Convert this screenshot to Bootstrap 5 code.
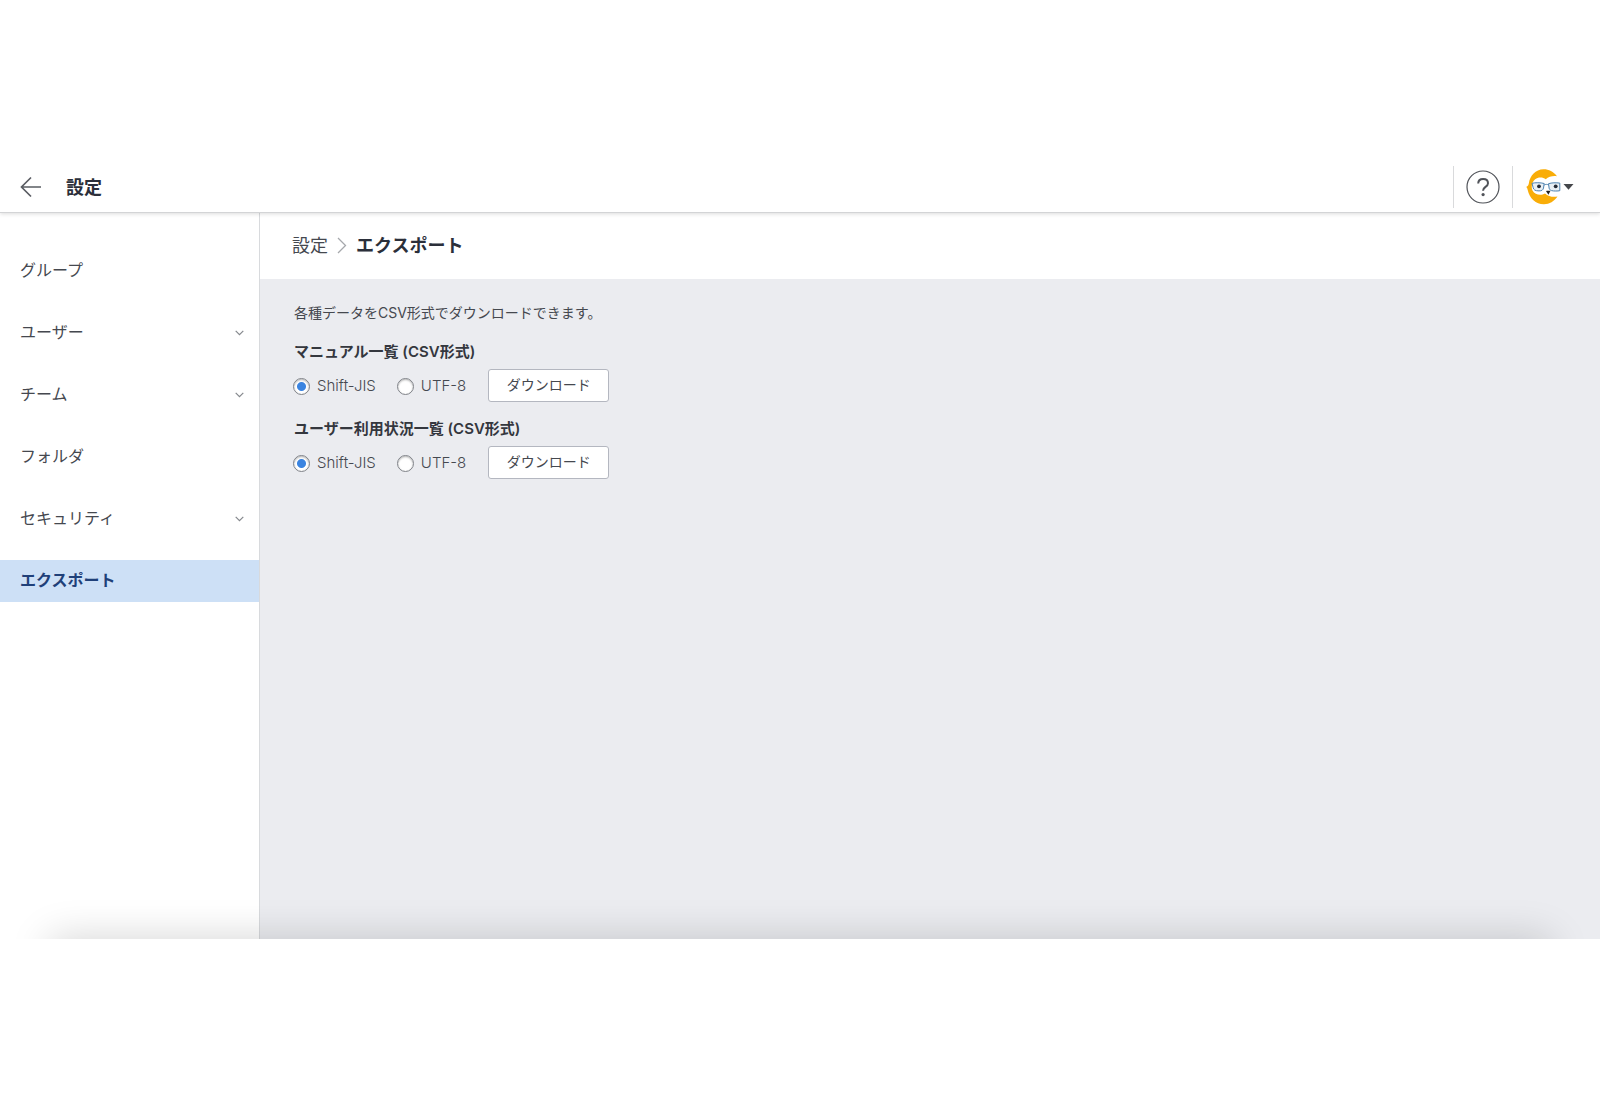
<!DOCTYPE html>
<html lang="ja">
<head>
<meta charset="utf-8">
<meta name="viewport" content="width=device-width, initial-scale=1">
<title>設定 - エクスポート</title>
<link href="https://cdn.jsdelivr.net/npm/bootstrap@5.3.0/dist/css/bootstrap.min.css" rel="stylesheet">
<style>
  body { font-family: Inter, "Noto Sans CJK JP", sans-serif; font-size: 14px; line-height: 21px; color: #45484f; background: #fff; }
  a { color: inherit; text-decoration: none; }
  .app-shell { margin-top: 160px; overflow: hidden; }
  .app-shell::after { content: ""; position: absolute; left: 50px; right: 50px; top: 100%; height: 40px; box-shadow: 0 0 40px rgba(0, 0, 0, .18); pointer-events: none; }
  .app-bar { height: 53px; padding: 2px 26px 0 20px; border-bottom: 1px solid #d3d4d6; box-shadow: 0 1px 4px rgba(0, 0, 0, .14); z-index: 1; background: #fff; }
  .app-title { font-size: 18px; line-height: 27px; font-weight: 700; color: #2b2f3a; margin-left: 24px; }
  .bar-sep { width: 1px; height: 42px; background: #d9dadc; }
  .bar-btn { background: none; border: 0; padding: 0; display: flex; align-items: center; }
  .account-btn { margin-left: 13px; }
  .app-body { min-height: 66vh; }
  .side-menu { width: 260px; padding-top: 37px; border-right: 1px solid #d8dadd; gap: 20px; }
  .side-menu a { height: 42px; padding: 0 20px 3px; font-size: 16px; line-height: 24px; }
  .side-menu svg { margin-right: -5px; margin-top: 2px; }
  .side-menu a.current { background: #cde0f6; color: #1f4079; font-weight: 700; }
  .crumbs { height: 66px; padding: 0 32px 2px; font-size: 18px; line-height: 27px; gap: 9px; }
  .crumbs strong { color: #2b2f3a; }
  .export-area { background: #ebecf0; padding: 23px 34px; }
  .export-area p { margin-bottom: 18px; }
  .export-form { margin-bottom: 16px; }
  .export-form h2 { font-size: 15px; line-height: 21px; font-weight: 600; color: #34373e; margin-bottom: 7px; }
  .choice { display: flex; align-items: center; gap: 7px; margin-right: 22px; font-size: 15px; line-height: 21px; font-weight: 300; }
  .choice input { appearance: none; width: 17px; height: 17px; margin: 2px 0 0 -1px; border: 1px solid #7f8288; border-radius: 50%; background: #fff; box-shadow: inset 0 1px 2px rgba(0, 0, 0, .3); }
  .choice input:checked { background: radial-gradient(circle, #3b84e0 4px, #fff 5px); }
  .dl-btn { width: 121px; height: 33px; padding: 0 0 2px; border: 1px solid #b4b7c0; border-radius: 3px; background: #fff; color: #45484f; font-size: 14px; line-height: 21px; }
</style>
<script src="https://cdn.jsdelivr.net/npm/bootstrap@5.3.0/dist/js/bootstrap.bundle.min.js"></script>
</head>
<body>
<div class="app-shell position-relative d-flex flex-column">
  <header class="app-bar d-flex align-items-center position-relative">
    <a href="#" aria-label="戻る" class="d-flex"><svg width="22" height="22" viewBox="0 0 22 22" fill="none" stroke="#5a5d63" stroke-width="1.7"><path d="M21 11H1.5M11 1.5 1.5 11l9.500 9.500"/></svg></a>
    <h1 class="app-title mb-0">設定</h1>
    <div class="d-flex align-items-center ms-auto">
      <span class="bar-sep"></span>
      <button type="button" class="bar-btn mx-2 px-1" aria-label="ヘルプ"><svg width="34" height="34" viewBox="0 0 34 34" fill="none" stroke="#505359"><circle cx="17" cy="17" r="16" stroke-width="1.2"/><path d="M12.200 13.500c.1-2.900 2.100-4.500 4.900-4.500 2.900 0 4.900 1.700 4.900 4.200 0 3.600-4.900 3.800-4.900 7.200v.4" stroke-width="2"/><circle cx="17.100" cy="24.600" r="1.600" fill="#505359" stroke="none"/></svg></button>
      <span class="bar-sep"></span>
      <button type="button" class="bar-btn account-btn" aria-label="アカウント"><svg width="48" height="36" viewBox="0 0 48 36">
        <path d="M31 7.200C27.500 2.500 22.500.2 17.500.3 9.500.6 4 6.500 2.800 14.500c-.2 1.500-.8 2.500-2.600 3.500.9.800 1.200 1.700 1.500 3C3.500 29.500 10 35.400 18 35.300c5.500-.2 10-2.800 13.500-7.800-4.500.8-9 .2-12.500-3-4 2.500-10 1.500-12.500-3-2.200-5 .5-12 6.500-13 2.800-.3 5 .3 6.800 1.800C22.500 7.700 26.700 6.600 31 7.200z" fill="#f9ad08"/>
        <path d="M6 14.300c3-.8 8.500-.8 12.200.2l-.7 4.500c-.4 2-1.800 2.900-4.500 2.900-3.800 0-5.500-1-5.900-3.500zM22.500 14.700c3.200-1 7.500-1.200 11.300-.6v7.600c-2 .4-6 .5-8.300-.1-1.500-.5-2.200-1.300-2.400-2.600z" fill="#e9eff4" stroke="#4d82b0" stroke-width="1"/>
        <path d="M18.200 16c1.300-.8 3.200-.8 4.500 0" fill="none" stroke="#4d82b0"/>
        <circle cx="13" cy="17.300" r="1.900" fill="#252b36"/><circle cx="29.700" cy="17.300" r="1.900" fill="#252b36"/>
        <path d="M20 22c1-.5 3.200-.5 4.400 0l-2 3.800z" fill="#222"/>
        <path d="M37.500 15h10l-5 5.800z" fill="#45474b"/>
      </svg></button>
    </div>
  </header>
  <div class="app-body d-flex">
    <nav class="side-menu d-flex flex-column flex-shrink-0" aria-label="設定">
      <a href="#" class="d-flex align-items-center">グループ</a>
      <a href="#" class="d-flex align-items-center justify-content-between">ユーザー<svg width="9" height="6" viewBox="0 0 9 6" fill="none" stroke="#85888d" stroke-width="1.200"><path d="M.7.9 4.500 4.700 8.300.9"/></svg></a>
      <a href="#" class="d-flex align-items-center justify-content-between">チーム<svg width="9" height="6" viewBox="0 0 9 6" fill="none" stroke="#85888d" stroke-width="1.200"><path d="M.7.9 4.500 4.700 8.300.9"/></svg></a>
      <a href="#" class="d-flex align-items-center">フォルダ</a>
      <a href="#" class="d-flex align-items-center justify-content-between">セキュリティ<svg width="9" height="6" viewBox="0 0 9 6" fill="none" stroke="#85888d" stroke-width="1.200"><path d="M.7.9 4.500 4.700 8.300.9"/></svg></a>
      <a href="#" class="d-flex align-items-center current" aria-current="page">エクスポート</a>
    </nav>
    <main class="d-flex flex-column flex-grow-1">
      <div class="crumbs d-flex align-items-center">
        <a href="#">設定</a>
        <svg width="10" height="17" viewBox="0 0 10 17" fill="none" stroke="#a6a8ac" stroke-width="1.300"><path d="m1 1 7.500 7.500L1 16"/></svg>
        <strong>エクスポート</strong>
      </div>
      <section class="export-area flex-grow-1">
        <p>各種データをCSV形式でダウンロードできます。</p>
        <form class="export-form">
          <h2>マニュアル一覧 (CSV形式)</h2>
          <div class="d-flex align-items-center">
            <label class="choice"><input type="radio" name="manual" checked>Shift-JIS</label>
            <label class="choice"><input type="radio" name="manual">UTF-8</label>
            <button type="button" class="dl-btn">ダウンロード</button>
          </div>
        </form>
        <form class="export-form">
          <h2>ユーザー利用状況一覧 (CSV形式)</h2>
          <div class="d-flex align-items-center">
            <label class="choice"><input type="radio" name="usage" checked>Shift-JIS</label>
            <label class="choice"><input type="radio" name="usage">UTF-8</label>
            <button type="button" class="dl-btn">ダウンロード</button>
          </div>
        </form>
      </section>
    </main>
  </div>
</div>
</body>
</html>
